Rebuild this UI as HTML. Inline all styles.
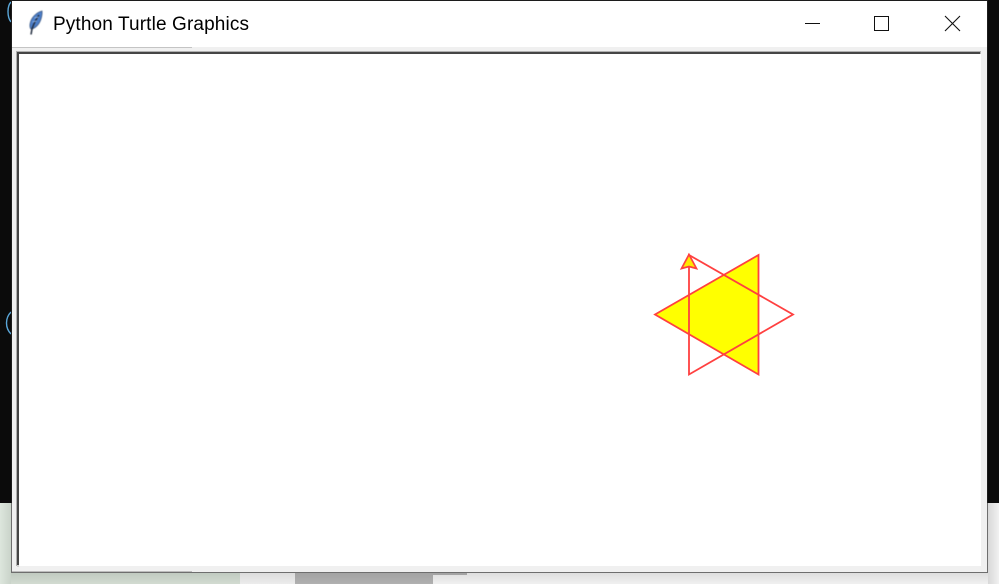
<!DOCTYPE html>
<html>
<head>
<meta charset="utf-8">
<style>
html,body{margin:0;padding:0;width:999px;height:584px;overflow:hidden;background:#0a0a0a;}
.a{position:absolute;}
</style>
</head>
<body>
<div class="a" style="left:0;top:0;width:999px;height:584px;overflow:hidden">
  <!-- desktop behind -->
  <div class="a" style="left:0;top:0;width:999px;height:503px;background:#0b0b0b"></div>
  <div class="a" style="left:0;top:503px;width:11px;height:81px;background:linear-gradient(90deg,#dde6dd,#c9d3c9)"></div>
  <div class="a" style="left:11px;top:573px;width:229px;height:11px;background:linear-gradient(180deg,#c0cac0,#d2dbd1)"></div>
  <div class="a" style="left:240px;top:573px;width:55px;height:11px;background:linear-gradient(180deg,#dcdcdc,#ececec)"></div>
  <div class="a" style="left:295px;top:573px;width:138px;height:11px;background:linear-gradient(180deg,#a3a3a3,#b0b0b0)"></div>
  <div class="a" style="left:433px;top:573px;width:555px;height:11px;background:linear-gradient(180deg,#dedede,#f0f0f0)"></div>
  <div class="a" style="left:433px;top:573px;width:34px;height:2px;background:#a4a4a4"></div>
  <div class="a" style="left:988px;top:503px;width:11px;height:81px;background:linear-gradient(90deg,#d8d8d8,#f1f1f1)"></div>
  <!-- left arcs -->
  <svg class="a" style="left:0;top:0" width="12" height="340" viewBox="0 0 12 340">
    <path d="M11 2C7 6 7 17 11 22" fill="none" stroke="#5aa6d8" stroke-width="1.4"/>
    <path d="M11 312C5 318 5 328 11 334" fill="none" stroke="#5aa6d8" stroke-width="1.4"/>
  </svg>
  <!-- window -->
  <div class="a" style="left:11px;top:0;width:977px;height:503px;background:#1c1c1c"></div>
  <div class="a" style="left:11px;top:503px;width:977px;height:70px;background:#6e6e6e"></div>
  <div class="a" style="left:12px;top:1px;width:975px;height:571px;background:#f0f0f0"></div>
  <div class="a" style="left:12px;top:1px;width:975px;height:46px;background:#fff"></div>
  <div class="a" style="left:12px;top:47px;width:180px;height:1px;background:#c4c4c4"></div>
  <div class="a" style="left:12px;top:571px;width:180px;height:1px;background:#bdbdbd"></div>
  <!-- canvas frame -->
  <div class="a" style="left:19px;top:54px;width:962px;height:512px;background:#fff"></div>
  <div class="a" style="left:16px;top:51px;width:965px;height:1px;background:#b0b0b0"></div>
  <div class="a" style="left:16px;top:51px;width:1px;height:515px;background:#b0b0b0"></div>
  <div class="a" style="left:17px;top:52px;width:963px;height:2px;background:#454545"></div>
  <div class="a" style="left:17px;top:52px;width:2px;height:513px;background:#454545"></div>
  <div class="a" style="left:17px;top:565px;width:2px;height:2px;background:#d0d0d0"></div>
  <div class="a" style="left:980px;top:52px;width:1px;height:2px;background:#b5b5b5"></div>
  <!-- feather icon -->
  <svg class="a" style="left:25px;top:9px;filter:blur(.45px)" width="22" height="28" viewBox="0 0 22 28">
    <path d="M17 2C11.500 3.500 6 8.500 5 15C4.700 17 5 19 6 20C10.500 19.500 14.500 15 16 10C16.800 7.300 17.300 4.500 17 2Z" fill="#4c7fca" stroke="#3d5a86" stroke-width=".8"/>
    <path d="M14 6C11.500 9.500 9 14 7 20L6 25.500" fill="none" stroke="#222c3e" stroke-width="1.500"/>
    <path d="M7.500 13L11.500 12M9.500 9L13.500 8" stroke="#a8c6ee" stroke-width=".9" fill="none"/>
  </svg>
  <!-- title -->
  <div class="a" style="left:53px;top:13px;font:19px/24px 'Liberation Sans',sans-serif;letter-spacing:.13px;color:#000;white-space:nowrap">Python Turtle Graphics</div>
  <!-- controls -->
  <svg class="a" style="left:800px;top:10px" width="170" height="28" viewBox="0 0 170 28" shape-rendering="crispEdges">
    <rect x="5" y="13" width="15" height="1" fill="#111"/>
    <rect x="74.500" y="6.500" width="14" height="14" fill="none" stroke="#111" stroke-width="1"/>
  </svg>
  <svg class="a" style="left:940px;top:10px" width="26" height="28" viewBox="0 0 26 28">
    <path d="M5 6L20 21M20 6L5 21" stroke="#111" stroke-width="1.100" fill="none"/>
  </svg>
  <!-- turtle drawing -->
  <svg class="a" style="left:640px;top:240px" width="170" height="145" viewBox="0 0 170 145">
    <path d="M15 74.500L118.500 15V134.500Z" fill="#ff0" />
    <path d="M49 134.500V15L153 74.500L49 134.500Z" fill="none" stroke="#ff4040" stroke-width="1.800"/>
    <path d="M15 74.500L118.500 15V134.500Z" fill="none" stroke="#ff4040" stroke-width="1.800"/>
    <path d="M49 14.500L56.500 28.500L49 26.500L41.500 28.500Z" fill="#ffe800" stroke="#ff4040" stroke-width="1.700"/>
  </svg>
</div>
</body>
</html>
